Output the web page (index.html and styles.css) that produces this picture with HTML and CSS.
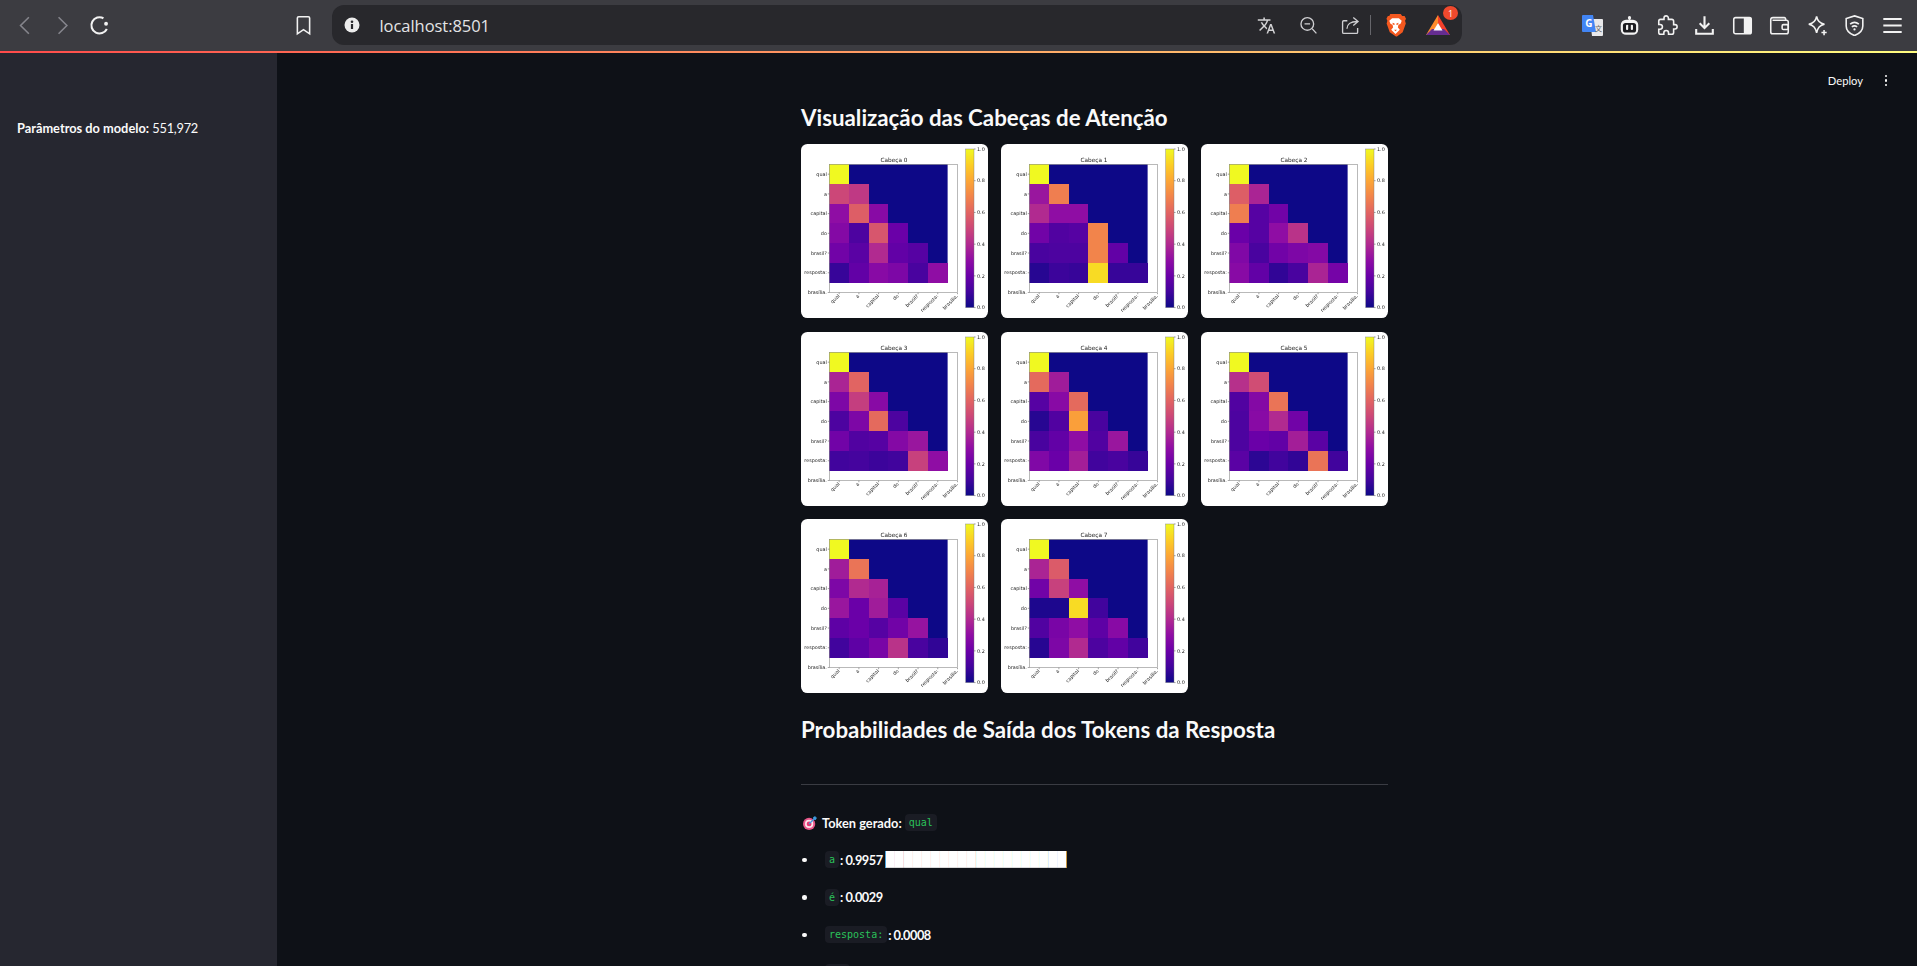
FILE: index.html
```html
<!DOCTYPE html>
<html lang="pt">
<head>
<meta charset="utf-8">
<title>localhost:8501</title>
<link rel="stylesheet" href="styles.css">
</head>
<body>
<header class="chrome">
  <nav class="nav">
    <span class="tool"><svg class="i24" viewBox="0 0 24 24"><path class="s-dim" d="M17 2.5 7.5 12l9.500 9.500"/></svg></span>
    <span class="tool"><svg class="i24" viewBox="0 0 24 24"><path class="s-dim" d="m7.500 2.500 9.500 9.500-9.500 9.500"/></svg></span>
    <span class="tool"><svg class="i24" viewBox="0 0 24 24"><path class="s-white s-thick" d="M16.500 3.700A9.300 9.300 0 1 0 20.400 16"/><circle class="f-white" cx="19.500" cy="10" r="2.200"/></svg></span>
  </nav>
  <span class="tool bookmark"><svg class="i24" viewBox="0 0 24 24"><path class="s-white" d="M6.500 2h11A1.500 1.500 0 0 1 19 3.500V21.500l-7-4.800-7 4.800V3.500A1.500 1.500 0 0 1 6.500 2z"/></svg></span>
  <div class="pill">
    <svg class="info" viewBox="0 0 16 16"><circle class="f-light" cx="8" cy="8" r="7.500"/><rect class="f-pill" x="6.900" y="7" width="2.200" height="5"/><circle class="f-pill" cx="8" cy="4.800" r="1.300"/></svg>
    <span class="url">localhost:8501</span>
    <div class="pill-right">
      <span class="ptool"><svg class="i20" viewBox="0 0 24 24"><path class="f-soft" d="M12.870 15.070l-2.540-2.510.03-.03c1.740-1.940 2.980-4.170 3.710-6.530H17V4h-7V2H8v2H1v1.990h11.170C11.500 7.920 10.440 9.750 9 11.350 8.070 10.320 7.300 9.190 6.690 8h-2c.73 1.630 1.730 3.170 2.980 4.560l-5.090 5.020L4 19l5-5 3.110 3.110.76-2.040zM18.500 10h-2L12 22h2l1.120-3h4.750L21 22h2l-4.500-12zm-2.620 7l1.620-4.330L19.120 17h-3.240z"/></svg></span>
      <span class="ptool"><svg class="i20" viewBox="0 0 24 24"><circle class="s-soft" cx="10.500" cy="10" r="8"/><path class="s-soft" d="M7 10h7M16.500 16l5.500 6"/></svg></span>
      <span class="ptool"><svg class="i20" viewBox="0 0 24 24"><path class="s-soft" d="M8 6H3.500A1.500 1.500 0 0 0 2 7.500v13A1.500 1.500 0 0 0 3.500 22h16a1.500 1.500 0 0 0 1.500-1.500V15M7.500 16c0-5.500 4.500-9 13-9M15.500 2l6 5-6 5"/></svg></span>
      <span class="pdiv"></span>
      <span class="ptool brave"><svg class="brave-i" viewBox="0 0 22 24"><path fill="#f4581f" d="M5.500 0h11l1.500 2 2.500 0 1.500 3-1 2 .8 3-3.300 9-6 4.500a1 1 0 0 1-1 0L5 19 1.700 10l.8-3-1-2L3 2h1.500z"/><path fill="#fff" d="M7.500 4.500h7l3 2.500-1 3-2.500 1.500-.5 2.500 2 2.500L11 21l-4.500-4.500 2-2.500-.5-2.500L5.500 10l-1-3z"/><path fill="#f4581f" d="M8 9l2 1v1.500L8 11zM14 9l-2 1v1.500l2-.5zM9.500 16.500h3L11 18z"/></svg></span>
      <span class="ptool bat">
        <svg class="bat-i" viewBox="0 0 24 20"><path fill="#f4402a" d="M12 0 24 20H16L12 8z"/><path fill="#ff8a2b" d="M12 0 0 20H6.500L12 8z"/><path fill="#662d91" d="M0 20 6 14h12l6 6z"/><path fill="#fff" d="M12 8l4.500 7.500h-9z"/></svg>
        <span class="badge">1</span>
      </span>
    </div>
  </div>
  <div class="ext">
    <span class="tool"><svg class="i-gt" viewBox="0 0 21 21"><path fill="#e8e8ea" d="M8 4h12a1 1 0 0 1 1 1v15a1 1 0 0 1-1 1H10z"/><path fill="#4285f4" d="M1 0h10l3 17H1a1 1 0 0 1-1-1V1a1 1 0 0 1 1-1z"/><text class="gt-g" x="3.200" y="12">G</text><text class="gt-z" x="13" y="16">文</text></svg></span>
    <span class="tool"><svg class="i24" viewBox="0 0 24 24"><rect class="f-white" x="11" y="2" width="2" height="4"/><circle class="f-white" cx="12" cy="3" r="1.800"/><rect class="f-white" x="2" y="5.500" width="20" height="17" rx="6"/><rect fill="#1c1c20" x="4.500" y="9" width="15" height="11" rx="3"/><rect class="f-white" x="8" y="11" width="2.500" height="6" rx="1"/><rect class="f-white" x="13.500" y="11" width="2.500" height="6" rx="1"/></svg></span>
    <span class="tool"><svg class="i24" viewBox="0 0 24 24"><path class="s-white" d="M20.500 11H19V7c0-1.100-.9-2-2-2h-4V3.500C13 2.120 11.880 1 10.500 1S8 2.120 8 3.500V5H4c-1.100 0-1.990.9-1.990 2v3.800H3.500c1.490 0 2.700 1.210 2.700 2.700s-1.210 2.700-2.700 2.700H2V20c0 1.100.9 2 2 2h3.800v-1.500c0-1.490 1.210-2.700 2.700-2.700 1.490 0 2.700 1.210 2.700 2.700V22H17c1.100 0 2-.9 2-2v-4h1.500c1.380 0 2.500-1.120 2.500-2.500S21.880 11 20.500 11z"/></svg></span>
    <span class="tool"><svg class="i24" viewBox="0 0 24 24"><path class="s-white s-thick" d="M12 1.500V15M6.500 9.500l5.500 5.500 5.500-5.500M2.500 16v5.500h19V16"/></svg></span>
    <span class="tool"><svg class="i24" viewBox="0 0 24 24"><rect class="s-white" x="2" y="3" width="20" height="18.500" rx="2"/><rect class="f-white" x="13.500" y="3" width="8.500" height="18.500"/></svg></span>
    <span class="tool"><svg class="i24" viewBox="0 0 24 24"><path class="s-white" d="M19 6V4.500A1.500 1.500 0 0 0 17.500 3H4.500A2.500 2.500 0 0 0 2 5.500v14A2 2 0 0 0 4 21.500h16a2 2 0 0 0 2-2V8a2 2 0 0 0-2-2H4"/><rect class="s-white" x="15" y="11" width="7" height="5.500" rx="1.500"/></svg></span>
    <span class="tool"><svg class="i24" viewBox="0 0 24 24"><path class="s-white" d="M11 1.500c1 5.500 3.500 8 9 9-5.500 1-8 3.500-9 10-1-6.500-3.500-9-9-10 5.500-1 8-3.500 9-9z"/><path class="s-white" d="M19.500 17v6M16.500 20h6"/></svg></span>
    <span class="tool"><svg class="i24" viewBox="0 0 24 24"><path class="s-white" d="M12 1 21.500 4v8.500C21.500 18 17 21.500 12 23.500 7 21.500 2.500 18 2.500 12.500V4z"/><path class="s-white" d="M7 10.500c3-2.500 7-2.500 10 0M9 13.500c2-1.500 4-1.500 6 0"/><circle class="f-white" cx="12" cy="16.500" r="1.300"/></svg></span>
    <span class="tool"><svg class="i24" viewBox="0 0 24 24"><path class="s-white s-thick" d="M1.500 4.500h21M1.500 12h21M1.500 19.500h21"/></svg></span>
  </div>
</header>
<div class="decoration"></div>
<div class="app">
  <aside class="sidebar">
    <p class="param"><strong>Parâmetros do modelo:</strong> <span class="param-val">551,972</span></p>
  </aside>
  <main class="main">
    <div class="topbar">
      <span class="deploy">Deploy</span>
      <span class="kebab"><i></i><i></i><i></i></span>
    </div>
    <div class="block">
      <h2 class="title">Visualização das Cabeças de Atenção</h2>
      <div class="grid" id="heads"></div>
      <h2 class="title title-probs">Probabilidades de Saída dos Tokens da Resposta</h2>
      <hr class="rule">
      <p class="token">
        <svg class="target" viewBox="0 0 16 16"><circle fill="#e8578a" cx="7" cy="9" r="7"/><circle fill="#fbe3ea" cx="7" cy="9" r="4.700"/><circle fill="#e0386f" cx="7" cy="9" r="2.800"/><path d="M7 9 14 2" stroke="#3d9be0" stroke-width="1.600"/><path fill="#3d9be0" d="M11.500 1.500 14 0l.5 1.500L16 2l-1.500 2.500-2.500-.5z"/></svg>
        <strong>Token gerado:</strong><code class="code code-first">qual</code>
      </p>
      <ul class="probs">
        <li><code class="code">a</code><strong>: 0.9957</strong><span class="bar">████████████████████</span></li>
        <li><code class="code">é</code><strong>: 0.0029</strong></li>
        <li><code class="code">resposta:</code><strong>: 0.0008</strong></li>
        <li><code class="code code-cut"></code></li>
      </ul>
    </div>
  </main>
</div>
<script src="heatmap.js"></script>
</body>
</html>
```
FILE: styles.css
```css
* { box-sizing: border-box; }
html, body { margin: 0; height: 966px; overflow: hidden; background: #0e1117; }
body { font-family: Lato, "Noto Sans", sans-serif; color: #fafafa; }

.chrome { height: 51px; background: #3c3c41; display: flex; align-items: center; padding: 0 10px 1px 6px; }
.nav { display: flex; }
.tool { width: 37.5px; height: 24px; display: flex; align-items: center; justify-content: center; flex: none; }
.bookmark { margin-left: 166px; margin-right: 9.500px; }
.i24 { width: 21px; height: 21px; }
.i20 { width: 19px; height: 19px; }
.s-dim { fill: none; stroke: #85858c; stroke-width: 1.800; }
.s-white { fill: none; stroke: #f2f2f2; stroke-width: 1.800; }
.s-thick { stroke-width: 2.400; }
.s-soft { fill: none; stroke: #cfcfd2; stroke-width: 1.700; }
.f-white { fill: #f2f2f2; }
.f-light { fill: #ececec; }
.f-soft { fill: #d2d2d4; }
.f-pill { fill: #28282c; }

.pill { width: 1130px; height: 40px; border-radius: 12px; background: #28282c; display: flex; align-items: center; padding-left: 12px; flex: none; }
.info { width: 16px; height: 16px; flex: none; }
.url { margin-left: 20px; font-family: "Open Sans", sans-serif; font-size: 16.500px; color: #e4e4e6; letter-spacing: -.05px; }
.pill-right { margin-left: auto; margin-right: 5.500px; display: flex; align-items: center; }
.ptool { width: 42px; display: flex; justify-content: center; align-items: center; position: relative; }
.pdiv { width: 1px; height: 20px; background: #66666b; margin: 0 6px 0 -2px; }
.brave { width: 30px; margin: 0 4px; }
.brave-i { width: 21px; height: 23px; }
.bat { width: 42px; margin-left: 2.500px; margin-right: -3px; }
.bat-i { width: 24px; height: 20px; }
.badge { position: absolute; top: -9px; right: 1px; width: 15px; height: 14px; border-radius: 50%; background: #f0492d; color: #fff; font-size: 9px; font-family: "Open Sans", sans-serif; display: flex; align-items: center; justify-content: center; }
.ext { display: flex; margin-left: 112px; }
.i-gt { width: 21px; height: 21px; }
.gt-g { font-family: "Open Sans", sans-serif; font-size: 10px; font-weight: 700; fill: #fff; }
.gt-z { font-family: "Noto Sans CJK SC", sans-serif; font-size: 7px; fill: #666; }

.decoration { height: 2px; background: linear-gradient(90deg, #ff4b4b, #fffd80); }
.app { display: flex; height: 913px; }
.sidebar { width: 277px; flex: none; background: #262730; padding: 66px 17px 0; }
.param { margin: 0; font-size: 12.800px; line-height: 18px; }
.param strong { font-weight: 700; }
.param-val { letter-spacing: -.25px; }

.main { flex: 1; position: relative; padding: 50px 0 0 524px; overflow: hidden; }
.topbar { position: absolute; top: 21px; right: 30px; display: flex; align-items: center; gap: 21.500px; }
.deploy { font-size: 11.200px; color: #fafafa; }
.kebab { display: flex; flex-direction: column; gap: 2px; }
.kebab i { width: 2.500px; height: 2.500px; border-radius: 50%; background: #fafafa; display: block; }

.block { width: 587px; }
.title { margin: 0; font-size: 22.300px; line-height: 30px; font-weight: 700; color: #fafafa; }
.title-probs { margin-top: 21.500px; }
.grid { margin-top: 11px; display: grid; grid-template-columns: repeat(3, 187px); grid-auto-rows: 174.300px; gap: 13.300px 13px; }
.card { background: #fff; border-radius: 6.400px; overflow: hidden; }
.card svg { width: 187px; height: 174.300px; display: block; filter: blur(.4px); }
.ax-title { font-family: "DejaVu Sans", sans-serif; font-size: 5.800px; fill: #222; text-anchor: middle; }
.ax-label { font-family: "DejaVu Sans", sans-serif; font-size: 4.900px; fill: #222; }
.ax-y { text-anchor: end; }
.ax-x { text-anchor: end; }
.ax-frame { fill: none; stroke: #8b8b8b; stroke-width: .6; }
.ax-tick { stroke: #444; stroke-width: .5; }

.rule { margin: 39px 0 0; border: 0; height: 1px; background: #3a3c43; }
.token { margin: 29px 0 0; height: 18px; display: flex; align-items: center; font-size: 12.800px; padding-left: 2px; }
.target { width: 14px; height: 14px; margin-right: 5px; flex: none; }
.code { font-family: "DejaVu Sans Mono", monospace; font-size: 10px; line-height: 17px; height: 17px; background: #1a1c24; color: #2ac25a; border-radius: 4px; padding: 0 4px; display: inline-block; }
.code-first { margin-left: 3px; }
.code-cut { width: 25px; }
.probs { list-style: none; margin: 19px 0 0; padding: 0; display: flex; flex-direction: column; gap: 19.500px; }
.probs li { display: flex; align-items: center; height: 18px; font-size: 12.800px; }
.probs li::before { content: ""; width: 4.500px; height: 4.500px; border-radius: 50%; background: #fafafa; margin: 0 18.500px 0 1px; flex: none; }
.probs strong { margin-left: 1px; font-weight: 700; letter-spacing: -.5px; }
.bar { margin-left: 2px; font-family: "DejaVu Sans Mono", monospace; font-size: 15px; line-height: 17px; height: 17px; overflow: hidden; color: #fff; border-left: 1px solid #4aa3dc; border-right: 1px solid #c9963f; white-space: nowrap; }
```
FILE: heatmap.js
```js
var HEADS = [
  [[1],[.5,.45],[.3,.58,.28],[.27,.13,.55,.2],[.22,.16,.4,.18,.15],[.08,.18,.28,.25,.12,.3]],
  [[1],[.33,.68],[.4,.3,.3],[.22,.14,.15,.7],[.12,.13,.13,.7,.18],[.05,.09,.08,.93,.08,.08]],
  [[1],[.58,.38],[.68,.15,.22],[.2,.15,.3,.43],[.26,.12,.22,.25,.27],[.28,.18,.07,.12,.38,.23]],
  [[1],[.38,.6],[.25,.47,.28],[.13,.25,.62,.13],[.22,.14,.15,.27,.33],[.1,.11,.09,.1,.48,.3]],
  [[1],[.62,.35],[.15,.28,.62],[.05,.14,.78,.12],[.12,.18,.3,.14,.33],[.26,.2,.36,.1,.12,.08]],
  [[1],[.42,.52],[.14,.27,.65],[.13,.28,.4,.22],[.13,.2,.18,.36,.16],[.16,.06,.1,.07,.65,.1]],
  [[1],[.35,.65],[.25,.4,.37],[.33,.2,.35,.16],[.17,.2,.15,.22,.32],[.1,.17,.24,.43,.12,.07]],
  [[1],[.38,.57],[.22,.48,.3],[.03,.03,.93,.1],[.14,.24,.3,.17,.28],[.05,.25,.4,.13,.18,.1]]
];
var TOKENS = ["qual", "a", "capital", "do", "brasil?", "resposta:", "brasília."];
var PLASMA = [[13,8,135],[65,4,157],[106,0,168],[143,13,164],[177,42,144],[204,71,120],[225,100,98],[242,132,75],[252,166,54],[252,206,37],[240,249,33]];

function plasma(v) {
  var p = Math.min(v, 0.9999) * 10, i = Math.floor(p), f = p - i, a = PLASMA[i], b = PLASMA[i + 1];
  return "rgb(" + [0, 1, 2].map(function (k) { return Math.round(a[k] + (b[k] - a[k]) * f); }).join(",") + ")";
}

function chart(m, n) {
  var X0 = 28.3, Y0 = 20.3, C = 19.72, W = 128.4, s = "";
  s += '<text class="ax-title" x="93" y="17.6">Cabeça ' + n + "</text>";
  s += '<rect x="' + X0 + '" y="' + Y0 + '" width="' + 6 * C + '" height="' + 6 * C + '" fill="' + plasma(0) + '"/>';
  m.forEach(function (row, r) {
    row.forEach(function (v, c) {
      s += '<rect x="' + (X0 + c * C) + '" y="' + (Y0 + r * C) + '" width="' + C + '" height="' + C + '" fill="' + plasma(v) + '" shape-rendering="crispEdges"/>';
    });
  });
  s += '<rect class="ax-frame" x="' + X0 + '" y="' + Y0 + '" width="' + W + '" height="' + W + '"/>';
  TOKENS.forEach(function (t, i) {
    var py = Math.min(Y0 + (i + .5) * C, Y0 + W), px = Math.min(X0 + (i + .5) * C, X0 + W);
    s += '<line class="ax-tick" x1="' + (X0 - 1.5) + '" x2="' + X0 + '" y1="' + py + '" y2="' + py + '"/>';
    s += '<text class="ax-label ax-y" x="' + (X0 - 2.4) + '" y="' + (py + 1.7) + '">' + t + "</text>";
    s += '<line class="ax-tick" x1="' + px + '" x2="' + px + '" y1="' + (Y0 + W) + '" y2="' + (Y0 + W + 1.5) + '"/>';
    s += '<text class="ax-label ax-x" transform="translate(' + (px + .8) + " " + (Y0 + W + 3.6) + ') rotate(-45)">' + t + "</text>";
  });
  s += '<defs><linearGradient id="cb' + n + '" x1="0" y1="1" x2="0" y2="0">';
  PLASMA.forEach(function (p, i) { s += '<stop offset="' + i / 10 + '" stop-color="rgb(' + p.join(",") + ')"/>'; });
  s += "</linearGradient></defs>";
  s += '<rect x="164.7" y="5" width="8.3" height="158.6" fill="url(#cb' + n + ')" stroke="#777" stroke-width=".4"/>';
  for (var k = 0; k <= 5; k++) {
    var ty = 163.6 - k * 31.72;
    s += '<line class="ax-tick" x1="173" x2="174.6" y1="' + ty + '" y2="' + ty + '"/>';
    s += '<text class="ax-label" x="176" y="' + (ty + 1.7) + '">' + (k / 5).toFixed(1) + "</text>";
  }
  return '<svg viewBox="0 0 187 174.3">' + s + "</svg>";
}

var grid = document.getElementById("heads");
HEADS.forEach(function (m, n) {
  var card = document.createElement("div");
  card.className = "card";
  card.innerHTML = chart(m, n);
  grid.appendChild(card);
});
```
